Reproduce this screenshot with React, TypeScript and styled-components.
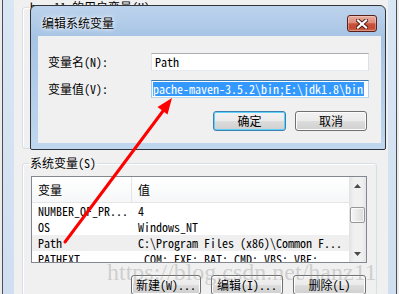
import styled, { createGlobalStyle } from 'styled-components';

const GlobalStyle = createGlobalStyle`
  html, body { margin: 0; padding: 0; }
  body {
    background: #ececec;
    font-family: "Noto Sans Mono CJK SC", "Noto Sans CJK SC", monospace;
    font-size: 12px;
    color: #000;
  }
`;

const Desktop = styled.div`
  position: relative;
  width: 399px;
  height: 294px;
  overflow: hidden;
  background: #ececec;
`;

/* window behind: 环境变量 */
const EnvWindow = styled.div`
  margin-left: 2px;
  width: 395px;
  height: 320px;
  box-sizing: border-box;
  border-left: 1px solid #4b4f55;
  border-right: 1px solid #4b4f55;
  background: linear-gradient(to bottom, #d9e6f4, #cfdef0);
  padding: 0 8px 0 11px;
`;

const EnvClient = styled.div`
  height: 100%;
  background: #f0f0f0;
  overflow: hidden;
`;

const Group = styled.fieldset<{ $gap?: number }>`
  margin: ${p => p.$gap ?? 0}px 11px 0 8px;
  padding: 0 9px 0 8px;
  min-inline-size: 0;
  border: 1px solid #d5dfe5;
  border-radius: 3px;
  box-shadow: inset 1px 1px 0 #fff;
`;

const GroupTitle = styled.legend`
  margin-left: -2px;
  padding: 0 1px;
  line-height: 14px;
  font-size: 12px;
`;

const Filler = styled.div<{ $h: number }>`
  height: ${p => p.$h}px;
`;

const ListView = styled.div`
  margin-top: 6px;
  height: 87px;
  box-sizing: border-box;
  border: 1px solid #828790;
  background: #fff;
  display: flex;
  overflow: hidden;
`;

const ListMain = styled.div`
  flex: 1;
  display: flex;
  flex-direction: column;
  overflow: hidden;
`;

const Header = styled.div`
  flex: none;
  height: 26px;
  box-sizing: border-box;
  display: flex;
  border-bottom: 1px solid #e5e5e5;
  background: linear-gradient(to bottom, #ffffff, #f6f7f8);
`;

const HeadCell = styled.div<{ $w?: number }>`
  ${p => (p.$w ? `width: ${p.$w}px; flex: none; border-right: 1px solid #e5e5e5;` : 'flex: 1;')}
  box-sizing: border-box;
  padding-left: 6px;
  line-height: 25px;
`;

const Row = styled.div<{ $selected?: boolean }>`
  flex: none;
  height: 16px;
  display: flex;
  background: ${p => (p.$selected ? '#efefef' : 'transparent')};
`;

const Cell = styled.div<{ $w?: number }>`
  ${p => (p.$w ? `width: ${p.$w}px; flex: none;` : 'flex: 1;')}
  box-sizing: border-box;
  padding-left: 6px;
  line-height: 16px;
  white-space: nowrap;
  overflow: hidden;
`;

const ScrollBar = styled.div`
  width: 17px;
  flex: none;
  display: flex;
  flex-direction: column;
  background: linear-gradient(to right, #e2e2e2, #f1f1f1 30%, #f1f1f1 70%, #e6e6e6);
`;

const ScrollBtn = styled.div`
  height: 17px;
  flex: none;
  display: flex;
  align-items: center;
  justify-content: center;
`;

const Track = styled.div`
  flex: 1;
  padding-top: 13px;
`;

const Thumb = styled.div`
  height: 16px;
  margin: 0 1px;
  box-sizing: border-box;
  border: 1px solid #979797;
  border-radius: 2px;
  background: linear-gradient(to right, #f6f6f6, #e9e9e9 50%, #dadada);
  box-shadow: inset 0 0 0 1px rgba(255, 255, 255, 0.7);
`;

const ButtonRow = styled.div<{ $top: number; $right: number; $gap: number }>`
  display: flex;
  justify-content: flex-end;
  gap: ${p => p.$gap}px;
  margin-top: ${p => p.$top}px;
  padding-right: ${p => p.$right}px;
`;

const Button = styled.div<{ $w: number; $default?: boolean }>`
  width: ${p => p.$w}px;
  height: 20px;
  box-sizing: border-box;
  border: 1px solid ${p => (p.$default ? '#3c7fb1' : '#707070')};
  border-radius: 3px;
  background: linear-gradient(to bottom, #f2f2f2 0%, #ebebeb 50%, #dddddd 51%, #cfcfcf 100%);
  box-shadow: inset 0 0 0 1px ${p => (p.$default ? '#5fd0f7' : '#fcfcfc')};
  display: flex;
  align-items: center;
  justify-content: center;
  line-height: 16px;
`;

/* the edit dialog on top */
const Dialog = styled.div`
  position: absolute;
  left: 30px;
  top: 5px;
  width: 356px;
  height: 145px;
  box-sizing: border-box;
  border: 1px solid #30353b;
  border-radius: 6px 6px 2px 2px;
  background: linear-gradient(to bottom, #bdd3ec 0%, #a7c4e5 22%, #b3cdea 60%, #c0d8ef 100%);
  display: flex;
  flex-direction: column;
`;

const TitleBar = styled.div`
  height: 30px;
  flex: none;
  display: flex;
  justify-content: space-between;
  align-items: flex-start;
`;

const TitleText = styled.div`
  margin: 10px 0 0 11px;
  line-height: 14px;
  font-family: "Noto Sans CJK SC", sans-serif;
  font-size: 12px;
  text-shadow: 0 0 6px #fff, 0 0 3px #fff;
`;

const CloseBtn = styled.div`
  margin: 9px 8px 0 0;
  width: 30px;
  height: 17px;
  box-sizing: border-box;
  border: 1px solid #5a1f16;
  border-radius: 3px;
  background: linear-gradient(to bottom, #e9ab9c 0%, #dc8b79 45%, #c8523d 52%, #c24a34 80%, #d06a4f 100%);
  box-shadow: inset 0 0 0 1px rgba(255, 255, 255, 0.3);
  display: flex;
  align-items: center;
  justify-content: center;
`;

const DialogClient = styled.div`
  flex: 1;
  margin: 0 4px 6px 7px;
  background: #f0f0f0;
  padding: 17px 0 0 10px;
`;

const Form = styled.div`
  display: grid;
  grid-template-columns: 103px 218px;
  row-gap: 9px;
  align-items: center;
`;

const Label = styled.div`
  line-height: 18px;
`;

const TextBox = styled.div<{ $focused?: boolean }>`
  height: 18px;
  box-sizing: border-box;
  background: #fff;
  border: 1px solid;
  border-color: ${p => (p.$focused ? '#3d7bad #b5cfe7 #b7d9ed #a4c9e3' : '#abadb3 #dbdfe6 #e3e9ef #e2e3ea')};
  padding-left: ${p => (p.$focused ? 1 : 3)}px;
  line-height: 16px;
  white-space: nowrap;
  overflow: hidden;
`;

const Selected = styled.span`
  display: inline-block;
  background: #3399ff;
  color: #fff;
  line-height: 14px;
  margin-top: 1px;
  padding-right: 1px;
`;

const Watermark = styled.div`
  position: absolute;
  left: 107px;
  top: 260px;
  font-family: "Liberation Serif", serif;
  font-size: 24px;
  line-height: 24px;
  color: rgba(150, 150, 150, 0.38);
  white-space: nowrap;
  pointer-events: none;
`;

const Overlay = styled.svg`
  position: absolute;
  left: 0;
  top: 0;
  pointer-events: none;
`;

const rows = [
  { name: 'NUMBER_OF_PR...', value: '4' },
  { name: 'OS', value: 'Windows_NT' },
  { name: 'Path', value: 'C:\\Program Files (x86)\\Common F...', selected: true },
  { name: 'PATHEXT', value: '.COM;.EXE;.BAT;.CMD;.VBS;.VBE;...' },
];

const Tri = ({ up }: { up?: boolean }) => (
  <svg width="7" height="4" viewBox="0 0 7 4">
    <path d={up ? 'M0 4 L3.5 0 L7 4 Z' : 'M0 0 L7 0 L3.5 4 Z'} fill="#4a4a4a" />
  </svg>
);

export default function App() {
  return (
    <Desktop>
      <GlobalStyle />
      <EnvWindow>
        <EnvClient>
          <Group>
            <GroupTitle>hanz11 的用户变量(U)</GroupTitle>
            <Filler $h={134} />
          </Group>
          <Group $gap={7}>
            <GroupTitle>系统变量(S)</GroupTitle>
            <ListView>
              <ListMain>
                <Header>
                  <HeadCell $w={100}>变量</HeadCell>
                  <HeadCell>值</HeadCell>
                </Header>
                {rows.map(r => (
                  <Row key={r.name} $selected={r.selected}>
                    <Cell $w={100}>{r.name}</Cell>
                    <Cell>{r.value}</Cell>
                  </Row>
                ))}
              </ListMain>
              <ScrollBar>
                <ScrollBtn><Tri up /></ScrollBtn>
                <Track><Thumb /></Track>
                <ScrollBtn><Tri /></ScrollBtn>
              </ScrollBar>
            </ListView>
            <ButtonRow $top={12} $right={1} $gap={10}>
              <Button $w={70}>新建(W)...</Button>
              <Button $w={72}>编辑(I)...</Button>
              <Button $w={73}>删除(L)</Button>
            </ButtonRow>
          </Group>
        </EnvClient>
      </EnvWindow>

      <Dialog>
        <TitleBar>
          <TitleText>编辑系统变量</TitleText>
          <CloseBtn>
            <svg width="12" height="10" viewBox="0 0 12 10">
              <path d="M2 1.5 L10 8.5 M10 1.5 L2 8.5" stroke="#4a1a12" strokeWidth="4" strokeLinecap="square" />
              <path d="M2 1.5 L10 8.5 M10 1.5 L2 8.5" stroke="#fff" strokeWidth="2.2" strokeLinecap="square" />
            </svg>
          </CloseBtn>
        </TitleBar>
        <DialogClient>
          <Form>
            <Label>变量名(N):</Label>
            <TextBox>Path</TextBox>
            <Label>变量值(V):</Label>
            <TextBox $focused>
              <Selected>{'pache-maven-3.5.2\\bin;E:\\jdk1.8\\bin'}</Selected>
            </TextBox>
          </Form>
          <ButtonRow $top={13} $right={14} $gap={9}>
            <Button $w={73} $default>确定</Button>
            <Button $w={72}>取消</Button>
          </ButtonRow>
        </DialogClient>
      </Dialog>

      <Watermark>https://blog.csdn.net/hanz11</Watermark>

      <Overlay width="399" height="294" viewBox="0 0 399 294">
        <line x1="65" y1="242" x2="163" y2="111" stroke="#f00" strokeWidth="3" strokeLinecap="round" />
        <polygon points="172,98 167.5,114.5 157.5,107" fill="#f00" />
      </Overlay>
    </Desktop>
  );
}
